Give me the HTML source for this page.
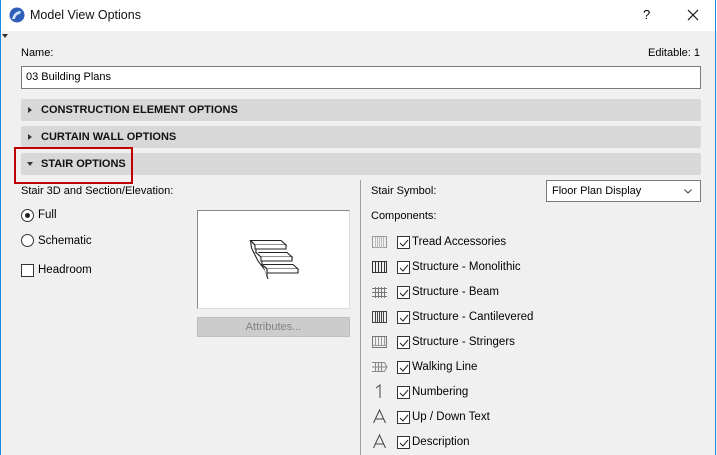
<!DOCTYPE html>
<html><head><meta charset="utf-8"><style>
*{box-sizing:border-box;margin:0;padding:0}
body{width:717px;height:455px;overflow:hidden;background:#f0f0f0;font-family:"Liberation Sans",sans-serif;font-size:11.5px;color:#000;position:relative}
.a{position:absolute}
.title{left:0;top:0;width:717px;height:31px;background:#fff}
.bar{left:21px;width:680px;height:22px;background:#d8d8d8;border-radius:2px;font-weight:bold;font-size:11px;line-height:22px;padding-left:20px;color:#111}
.tri{position:absolute;left:7px;top:8px;width:0;height:0;border-top:3px solid transparent;border-bottom:3px solid transparent;border-left:4px solid #333}
.trid{position:absolute;left:6px;top:9px;width:0;height:0;border-left:3.5px solid transparent;border-right:3.5px solid transparent;border-top:4px solid #333}
.cb{width:13px;height:13px;border:1px solid #333;background:#fff}
.row{left:372px;width:320px;height:20px;white-space:nowrap}
.row svg{position:absolute;left:0;top:3px;overflow:visible}
.row svg.ic{shape-rendering:crispEdges}
.row .cb{position:absolute;left:25px;top:3px}
.row span{position:absolute;left:40px;top:3px}
</style></head><body>
<div class="a title"></div>
<div class="a" style="left:0;top:0;width:1px;height:455px;background:#1e88e5"></div>
<div class="a" style="right:1px;top:0;width:1px;height:455px;background:#1e88e5"></div>
<svg class="a" style="left:9px;top:7px" width="16" height="16" viewBox="0 0 16 16"><circle cx="8" cy="8" r="7.5" fill="#2d5fb8"/><path d="M3 12 Q5 4 12 4 L11 7 Q7 7 6 12Z" fill="#cfe0f7"/></svg>
<div class="a" style="left:30px;top:8px;font-size:12.5px;color:#111">Model View Options</div>
<div class="a" style="left:643px;top:7px;font-size:13px">?</div>
<svg class="a" style="left:687px;top:9px" width="12" height="12"><path d="M1 1L11 11M11 1L1 11" stroke="#111" stroke-width="1.2"/></svg>
<div class="a" style="left:2px;top:34px;width:0;height:0;border-left:3px solid transparent;border-right:3px solid transparent;border-top:4px solid #333"></div>
<div class="a" style="left:21px;top:47px;font-size:11px">Name:</div>
<div class="a" style="left:648px;top:47px;font-size:11px">Editable: 1</div>
<div class="a" style="left:21px;top:66px;width:680px;height:23px;background:#fff;border:1px solid #7a7a7a;padding:4px 4px;font-size:11px">03 Building Plans</div>
<div class="a bar" style="top:99px"><i class="tri"></i>CONSTRUCTION ELEMENT OPTIONS</div>
<div class="a bar" style="top:126px"><i class="tri"></i>CURTAIN WALL OPTIONS</div>
<div class="a bar" style="top:153px"><i class="trid"></i>STAIR OPTIONS</div>
<div class="a" style="left:14px;top:147px;width:119px;height:37px;border:2px solid #c00000"></div>
<div class="a" style="left:21px;top:185px;font-size:11px">Stair 3D and Section/Elevation:</div>
<div class="a" style="left:21px;top:209px;width:13px;height:13px;border-radius:50%;border:1px solid #333;background:#fff"><div style="position:absolute;left:3px;top:3px;width:5px;height:5px;border-radius:50%;background:#222"></div></div>
<div class="a" style="left:38px;top:209px">Full</div>
<div class="a" style="left:21px;top:234px;width:13px;height:13px;border-radius:50%;border:1px solid #333;background:#fff"></div>
<div class="a" style="left:38px;top:235px">Schematic</div>
<div class="a cb" style="left:21px;top:264px"></div>
<div class="a" style="left:38px;top:264px">Headroom</div>
<div class="a" style="left:197px;top:210px;width:153px;height:99px;background:#fff;border:1px solid #888;border-right-color:#ddd;border-bottom-color:#ddd"></div>
<svg class="a" style="left:0;top:0" width="717" height="455" fill="#fff" stroke="#222" stroke-width="1.1">
<path d="M250.5 240.5L251.5 248L258 261L265 270L268 279"/>
<path d="M250.5 240.5H281L286 245H255Z"/><path d="M255 245V249H286V245"/><path d="M250.5 240.5L255 245"/>
<path d="M256 252.5H287L292 257H261Z"/><path d="M261 257V261H292V257"/><path d="M256 249V252.5L261 257"/>
<path d="M262 264.5H293L298 269H267Z"/><path d="M267 269V273H298V269"/><path d="M262 261V264.5L267 269V277"/>
</svg>
<div class="a" style="left:197px;top:317px;width:153px;height:20px;background:#cccccc;border:1px solid #bfbfbf;color:#838383;text-align:center;line-height:18px;font-size:11px">Attributes...</div>
<div class="a" style="left:360px;top:180px;width:1px;height:275px;background:#a0a0a0"></div>
<div class="a" style="left:371px;top:185px;font-size:11px">Stair Symbol:</div>
<div class="a" style="left:546px;top:180px;width:155px;height:22px;background:#fff;border:1px solid #7a7a7a;padding:4px 5px;font-size:11px">Floor Plan Display</div>
<svg class="a" style="left:684px;top:189px" width="8" height="5"><path d="M0.5 0.5L4 4L7.5 0.5" stroke="#444" fill="none"/></svg>
<div class="a" style="left:371px;top:210px;font-size:11px">Components:</div>

<div class="a row" style="top:233px"><svg class="ic" width="16" height="13"><rect x="0.5" y="0.5" width="14" height="11" fill="none" stroke="#999"/><path d="M3.5 1V12M5.5 1V12M7.5 1V12M9.5 1V12M11.5 1V12" stroke="#bbb"/></svg><div class="cb"></div><svg style="left:26px;top:5px" width="12" height="10"><path d="M2 5L5 8L10 2" stroke="#222" fill="none"/></svg><span>Tread Accessories</span></div>
<div class="a row" style="top:258px"><svg class="ic" width="16" height="13"><rect x="0.5" y="0.5" width="14" height="11" fill="none" stroke="#333"/><path d="M3.5 1V12M6.5 1V12M9.5 1V12M12.5 1V12" stroke="#333"/></svg><div class="cb"></div><svg style="left:26px;top:5px" width="12" height="10"><path d="M2 5L5 8L10 2" stroke="#222" fill="none"/></svg><span>Structure - Monolithic</span></div>
<div class="a row" style="top:283px"><svg class="ic" width="16" height="13"><path d="M0 2.5H15M0 6.5H15M0 10.5H15M3.5 1V12M6.5 1V12M9.5 1V12M12.5 1V12" stroke="#777"/></svg><div class="cb"></div><svg style="left:26px;top:5px" width="12" height="10"><path d="M2 5L5 8L10 2" stroke="#222" fill="none"/></svg><span>Structure - Beam</span></div>
<div class="a row" style="top:308px"><svg class="ic" width="16" height="13"><rect x="0.5" y="0.5" width="14" height="11" fill="none" stroke="#444"/><path d="M3.5 1V12M5.5 1V12M7.5 1V12M9.5 1V12M11.5 1V12" stroke="#444"/></svg><div class="cb"></div><svg style="left:26px;top:5px" width="12" height="10"><path d="M2 5L5 8L10 2" stroke="#222" fill="none"/></svg><span>Structure - Cantilevered</span></div>
<div class="a row" style="top:333px"><svg class="ic" width="16" height="13"><rect x="0.5" y="0.5" width="14" height="11" fill="none" stroke="#777"/><path d="M0 9.5H15M3.5 1V10M6.5 1V10M9.5 1V10M12.5 1V10" stroke="#999"/></svg><div class="cb"></div><svg style="left:26px;top:5px" width="12" height="10"><path d="M2 5L5 8L10 2" stroke="#222" fill="none"/></svg><span>Structure - Stringers</span></div>
<div class="a row" style="top:358px"><svg width="16" height="13"><path d="M0 1.5H12M0 10.5H12M0 6H15M3.5 1V11M6.5 1V11M9.5 1V11M12 1L15 6L12 11" stroke="#888" fill="none"/></svg><div class="cb"></div><svg style="left:26px;top:5px" width="12" height="10"><path d="M2 5L5 8L10 2" stroke="#222" fill="none"/></svg><span>Walking Line</span></div>
<div class="a row" style="top:383px"><svg width="16" height="15" style="top:1px"><path d="M4 4L8 1V14" stroke="#444" fill="none"/></svg><div class="cb"></div><svg style="left:26px;top:5px" width="12" height="10"><path d="M2 5L5 8L10 2" stroke="#222" fill="none"/></svg><span>Numbering</span></div>
<div class="a row" style="top:408px"><svg width="16" height="15" style="top:1px"><path d="M1.5 14L7.5 1L13.5 14M3.5 10H11.5" stroke="#444" fill="none"/></svg><div class="cb"></div><svg style="left:26px;top:5px" width="12" height="10"><path d="M2 5L5 8L10 2" stroke="#222" fill="none"/></svg><span>Up / Down Text</span></div>
<div class="a row" style="top:433px"><svg width="16" height="15" style="top:1px"><path d="M1.5 14L7.5 1L13.5 14M3.5 10H11.5" stroke="#444" fill="none"/></svg><div class="cb"></div><svg style="left:26px;top:5px" width="12" height="10"><path d="M2 5L5 8L10 2" stroke="#222" fill="none"/></svg><span>Description</span></div>
</body></html>
